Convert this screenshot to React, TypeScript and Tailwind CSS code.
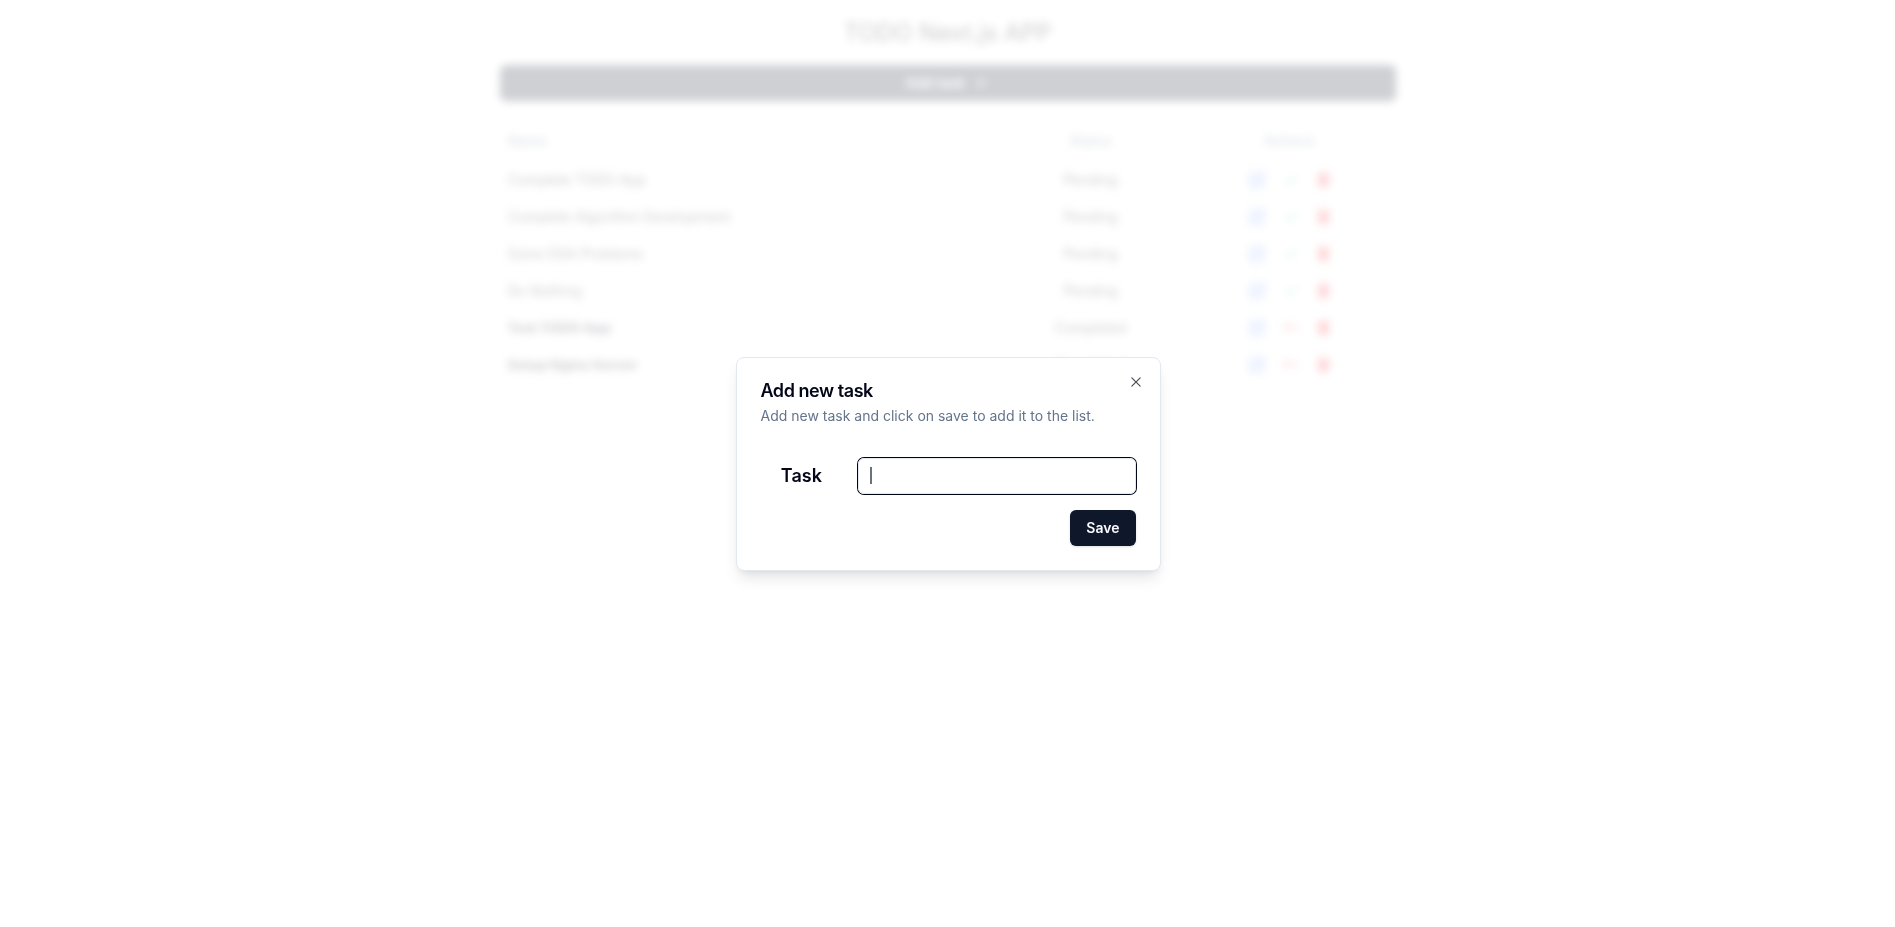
import { Check, Plus, SquarePen, Undo } from "lucide-react";
import { FaTrash } from "react-icons/fa";

type Task = { name: string; done: boolean };

const tasks: Task[] = [
  { name: "Complete TODO App", done: false },
  { name: "Complete Algorithm Development", done: false },
  { name: "Solve DSA Problems", done: false },
  { name: "Do Nothing", done: false },
  { name: "Test TODO App", done: true },
  { name: "Setup Nginx Server", done: true },
];

function CrossIcon() {
  return (
    <svg width="16" height="16" viewBox="0 0 15 15" fill="currentColor" aria-hidden="true">
      <path d="M11.7816 4.03157C12.0062 3.80702 12.0062 3.44295 11.7816 3.2184C11.5571 2.99385 11.193 2.99385 10.9685 3.2184L7.50005 6.68682L4.03164 3.2184C3.80708 2.99385 3.44301 2.99385 3.21846 3.2184C2.99391 3.44295 2.99391 3.80702 3.21846 4.03157L6.68688 7.49999L3.21846 10.9684C2.99391 11.193 2.99391 11.557 3.21846 11.7816C3.44301 12.0061 3.80708 12.0061 4.03164 11.7816L7.50005 8.31316L10.9685 11.7816C11.193 12.0061 11.5571 12.0061 11.7816 11.7816C12.0062 11.557 12.0062 11.193 11.7816 10.9684L8.31322 7.49999L11.7816 4.03157Z" />
    </svg>
  );
}

function TaskRow({ task }: { task: Task }) {
  return (
    <tr className="border-b border-slate-200">
      <td className={task.done ? "p-2 font-medium line-through" : "p-2"}>{task.name}</td>
      <td className="p-2 text-center">{task.done ? "Completed" : "Pending"}</td>
      <td className="p-2">
        <div className="flex h-5 items-center justify-center gap-4">
          <button type="button" aria-label="Edit task" className="text-blue-600">
            <SquarePen size={18} />
          </button>
          {task.done ? (
            <button type="button" aria-label="Mark as pending" className="text-red-500">
              <Undo size={18} />
            </button>
          ) : (
            <button type="button" aria-label="Mark as completed" className="text-green-500">
              <Check size={18} />
            </button>
          )}
          <button type="button" aria-label="Delete task" className="flex w-4 justify-center text-red-500">
            <FaTrash size={15} />
          </button>
        </div>
      </td>
    </tr>
  );
}

function TaskDialog() {
  return (
    <div
      role="dialog"
      aria-modal="true"
      aria-labelledby="dialog-title"
      aria-describedby="dialog-description"
      className="relative grid w-full max-w-[425px] gap-4 rounded-lg border border-slate-200 bg-white p-6 shadow-lg"
    >
      <div className="flex flex-col gap-1.5">
        <h2 id="dialog-title" className="text-lg leading-none font-semibold tracking-tight">
          Add new task
        </h2>
        <p id="dialog-description" className="text-sm text-[#64748b]">
          Add new task and click on save to add it to the list.
        </p>
      </div>
      <form className="grid gap-4 pt-4">
        <div className="grid grid-cols-4 items-center gap-4">
          <label htmlFor="task" className="text-center text-lg leading-none font-semibold">
            Task
          </label>
          <div className="relative col-span-3">
            <input
              id="task"
              type="text"
              className="block h-9 w-full rounded-md border border-slate-200 px-3 text-sm caret-transparent ring-1 ring-slate-950 outline-none"
            />
            <span className="absolute top-[9px] left-3 h-[17px] w-0.5 bg-gray-500" aria-hidden="true" />
          </div>
        </div>
        <button
          type="button"
          className="h-9 justify-self-end rounded-md bg-slate-900 px-4 text-sm font-semibold text-slate-50 shadow-sm"
        >
          Save
        </button>
      </form>
      <button type="button" aria-label="Close" className="absolute top-4 right-4 opacity-70">
        <CrossIcon />
      </button>
    </div>
  );
}

export default function App() {
  return (
    <div className="min-h-screen bg-white font-['Inter',sans-serif] text-slate-950">
      <main className="mx-auto flex max-w-4xl flex-col gap-4 pt-[17px]">
        <h1 className="text-center text-2xl">TODO Next.js APP</h1>
        <button
          type="button"
          className="flex h-9 w-full items-center justify-center rounded-md bg-slate-900 text-sm font-semibold text-slate-50 shadow-sm"
        >
          Add task
          <Plus size={16} className="ml-2" />
        </button>
        <table className="mt-1 w-full table-fixed text-sm">
          <thead>
            <tr className="h-10 border-b border-slate-200 text-slate-500">
              <th className="px-2 text-left font-medium">Name</th>
              <th className="w-[186px] px-2 text-center font-medium">Status</th>
              <th className="w-[212px] px-2 text-center font-medium">Actions</th>
            </tr>
          </thead>
          <tbody>
            {tasks.map((task) => (
              <TaskRow key={task.name} task={task} />
            ))}
          </tbody>
        </table>
      </main>
      <div className="fixed inset-0 flex items-center justify-center bg-white/80 pl-px backdrop-blur-xs">
        <TaskDialog />
      </div>
    </div>
  );
}
